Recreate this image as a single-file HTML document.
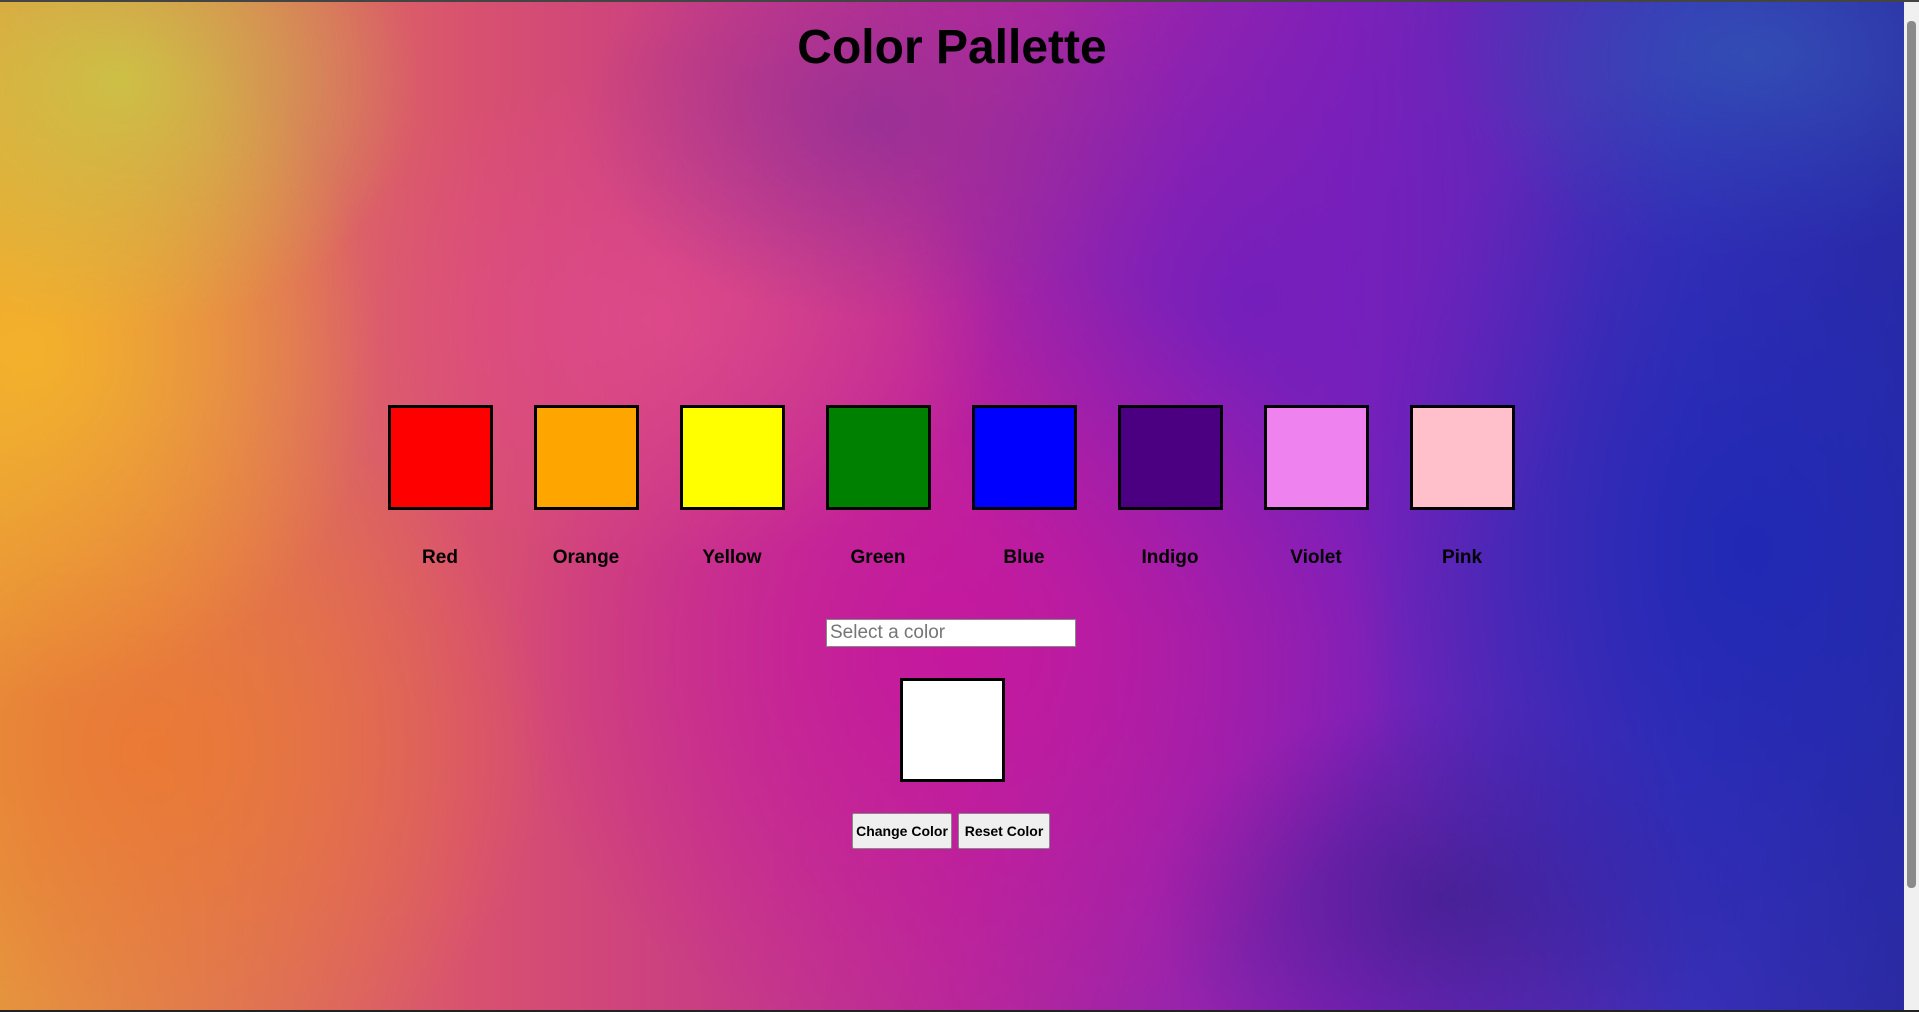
<!DOCTYPE html>
<html><head><meta charset="utf-8"><style>
html,body{margin:0;padding:0;width:1919px;height:1012px;overflow:hidden;font-family:"Comic Sans MS","Liberation Sans",sans-serif}
body{position:relative;background:
radial-gradient(ellipse 300px 250px at 120px 80px,rgba(200,200,70,.85),transparent),
radial-gradient(ellipse 350px 350px at 30px 350px,rgba(245,180,40,.9),transparent),
radial-gradient(ellipse 400px 350px at 150px 750px,rgba(235,120,50,.9),transparent),
radial-gradient(ellipse 300px 200px at 880px 120px,rgba(140,50,150,.7),transparent),
radial-gradient(ellipse 350px 250px at 650px 320px,rgba(225,75,140,.8),transparent),
radial-gradient(ellipse 450px 400px at 950px 650px,rgba(200,20,160,.8),transparent),
radial-gradient(ellipse 350px 350px at 1250px 300px,rgba(110,30,190,.8),transparent),
radial-gradient(ellipse 400px 500px at 1750px 550px,rgba(30,40,180,.9),transparent),
radial-gradient(ellipse 300px 200px at 1750px 60px,rgba(50,80,180,.9),transparent),
radial-gradient(ellipse 300px 200px at 1450px 900px,rgba(50,30,130,.6),transparent),
linear-gradient(90deg,#e49a40 0%,#d85070 25%,#b8289a 50%,#8020b8 70%,#3a30b8 88%,#2a2aa0 100%);}
.top{position:absolute;left:0;top:0;width:1919px;height:2px;background:#444}
.bot{position:absolute;left:0;top:1010px;width:1919px;height:2px;background:#222}
.sb{position:absolute;left:1904px;top:2px;width:15px;height:1008px;background:#f0f0f0}
.th{position:absolute;left:1907px;top:21px;width:9px;height:867px;background:#8a8a8a;border-radius:4px}
h1{position:absolute;left:0;width:1904px;top:18px;margin:0;text-align:center;font-size:48px;font-weight:bold;line-height:60px;color:#000}
.sw{position:absolute;top:405px;width:99px;height:99px;border:3px solid #000}
.lb{position:absolute;top:547px;width:146px;text-align:center;font-size:19px;font-weight:bold}
input{position:absolute;left:826px;top:619px;width:250px;height:28px;box-sizing:border-box;border:1px solid #888;font-family:inherit;font-size:19px;padding:0 3px;color:#888}
.wb{position:absolute;left:900px;top:678px;width:99px;height:98px;border:3px solid #000;background:#fff}
.bt{position:absolute;top:813px;height:36px;box-sizing:border-box;background:#efefef;border:1px solid #888;border-radius:2px;font-size:14px;font-weight:bold;text-align:center;line-height:34px}
</style></head><body>
<div class="top"></div>
<h1>Color Pallette</h1>
<div class="sw" style="left:388px;background:red"></div>
<div class="sw" style="left:534px;background:orange"></div>
<div class="sw" style="left:680px;background:yellow"></div>
<div class="sw" style="left:826px;background:green"></div>
<div class="sw" style="left:972px;background:blue"></div>
<div class="sw" style="left:1118px;background:indigo"></div>
<div class="sw" style="left:1264px;background:violet"></div>
<div class="sw" style="left:1410px;background:pink"></div>
<div class="lb" style="left:367px">Red</div>
<div class="lb" style="left:513px">Orange</div>
<div class="lb" style="left:659px">Yellow</div>
<div class="lb" style="left:805px">Green</div>
<div class="lb" style="left:951px">Blue</div>
<div class="lb" style="left:1097px">Indigo</div>
<div class="lb" style="left:1243px">Violet</div>
<div class="lb" style="left:1389px">Pink</div>
<input placeholder="Select a color">
<div class="wb"></div>
<div class="bt" style="left:852px;width:100px">Change Color</div>
<div class="bt" style="left:958px;width:92px">Reset Color</div>
<div class="sb"></div><div class="th"></div>
<div class="bot"></div>
</body></html>
